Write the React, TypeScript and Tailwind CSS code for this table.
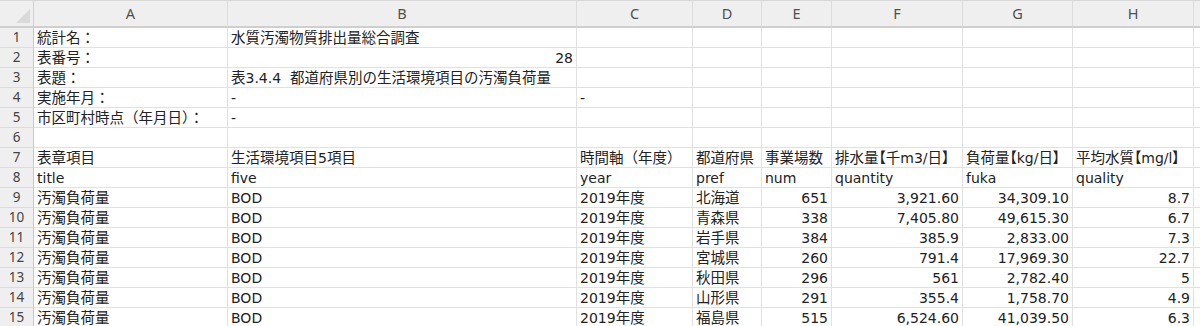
import React from "react";

type Align = "l" | "r";
type C = { t: string; a?: Align; p?: boolean } | null;

const cols = ["A", "B", "C", "D", "E", "F", "G", "H", ""];

const L = (t: string): C => ({ t, a: "l" });
const R = (t: string): C => ({ t, a: "r" });
const P = (t: string): C => ({ t, a: "l", p: true });

const prefs: [string, string, string, string, string][] = [
  ["北海道", "651", "3,921.60", "34,309.10", "8.7"],
  ["青森県", "338", "7,405.80", "49,615.30", "6.7"],
  ["岩手県", "384", "385.9", "2,833.00", "7.3"],
  ["宮城県", "260", "791.4", "17,969.30", "22.7"],
  ["秋田県", "296", "561", "2,782.40", "5"],
  ["山形県", "291", "355.4", "1,758.70", "4.9"],
  ["福島県", "515", "6,524.60", "41,039.50", "6.3"],
];

const rows: C[][] = [
  [L("統計名："), L("水質汚濁物質排出量総合調査"), null, null, null, null, null, null, null],
  [L("表番号："), R("28"), null, null, null, null, null, null, null],
  [L("表題："), L("表3.4.4\u00a0\u00a0都道府県別の生活環境項目の汚濁負荷量"), null, null, null, null, null, null, null],
  [L("実施年月："), L("-"), L("-"), null, null, null, null, null, null],
  [L("市区町村時点（年月日）："), L("-"), null, null, null, null, null, null, null],
  [null, null, null, null, null, null, null, null, null],
  [
    L("表章項目"),
    L("生活環境項目5項目"),
    L("時間軸（年度）"),
    L("都道府県"),
    L("事業場数"),
    P("排水量【千m3/日】"),
    P("負荷量【kg/日】"),
    P("平均水質【mg/l】"),
    null,
  ],
  [L("title"), L("five"), L("year"), L("pref"), L("num"), L("quantity"), L("fuka"), L("quality"), null],
  ...prefs.map((p) => [
    L("汚濁負荷量"),
    L("BOD"),
    L("2019年度"),
    L(p[0]),
    R(p[1]),
    R(p[2]),
    R(p[3]),
    R(p[4]),
    null,
  ]),
];

function Runs({ text, palt }: { text: string; palt?: boolean }) {
  const parts = text.split(/([\u3000-\u9fff\uff00-\uffef]+)/).filter((s) => s.length > 0);
  return (
    <>
      {parts.map((s, i) =>
        /[\u3000-\u9fff\uff00-\uffef]/.test(s) ? (
          <span
            key={i}
            className={
              "text-[14.5px] font-['Noto_Sans_CJK_JP',sans-serif] " +
              (palt ? "[font-feature-settings:'palt']" : "")
            }
          >
            {s}
          </span>
        ) : (
          <span key={i}>{s}</span>
        )
      )}
    </>
  );
}

export default function App() {
  return (
    <div className="w-[1200px] h-[326px] overflow-hidden bg-white text-[#222222] font-['DejaVu_Sans','Noto_Sans_CJK_JP',sans-serif]">
      <div className="grid grid-cols-[34px_194px_349px_116px_69px_70px_131px_110px_121px_1fr]">
        {/* corner */}
        <div className="relative h-[28px] bg-[#efefef] border-t border-[#d6d6d6] border-r border-r-[#d0d0d0] border-b-2 border-b-[#cfcfcf]">
          <div className="absolute right-[3px] bottom-[3px] w-0 h-0 border-l-[14px] border-l-transparent border-b-[14px] border-b-[#dadada]" />
        </div>
        {cols.map((c, i) => (
          <div
            key={"h" + i}
            className="h-[28px] bg-[#efefef] border-t border-[#d6d6d6] border-r border-r-[#dcdcdc] border-b-2 border-b-[#cfcfcf] flex items-center justify-center text-[14.5px] leading-none text-[#505050] font-['Noto_Sans','Liberation_Sans',sans-serif]"
          >
            {c}
          </div>
        ))}
        {rows.map((r, ri) => (
          <React.Fragment key={"r" + ri}>
            <div className="h-[20px] bg-[#efefef] border-r border-r-[#c8c8c8] border-b border-b-[#dcdcdc] flex items-center justify-center text-[13.5px] leading-none text-[#444444] font-['Noto_Sans','Liberation_Sans',sans-serif]">
              {ri + 1}
            </div>
            {r.map((c, ci) => (
              <div
                key={ci}
                className={
                  "h-[20px] border-r border-b border-[#e1e1e1] flex items-center whitespace-nowrap text-[14px] leading-none px-[3px] " +
                  (c && c.a === "r" ? "justify-end" : "justify-start")
                }
              >
                {c ? <Runs text={c.t} palt={c.p} /> : ""}
              </div>
            ))}
          </React.Fragment>
        ))}
      </div>
    </div>
  );
}
